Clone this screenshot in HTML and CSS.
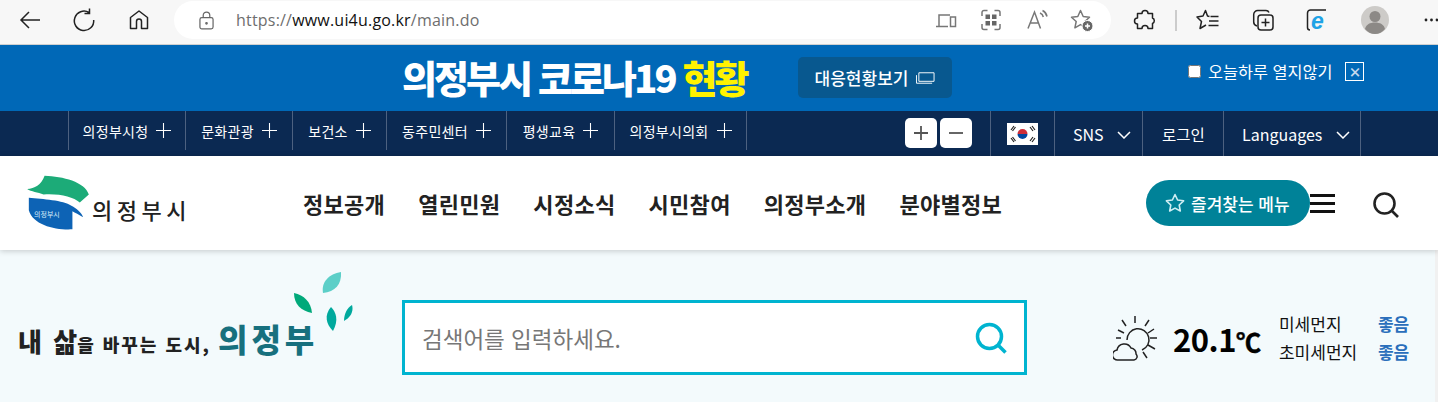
FILE: index.html
```html
<!DOCTYPE html>
<html lang="ko">

<head>
    <meta charset="UTF-8">
    <title>의정부시</title>
    <link rel="stylesheet" href="styles.css">
</head>

<body>
    <!-- browser toolbar -->
    <div class="toolbar">
        <svg class="tool" viewBox="0 0 24 24"><path d="M23 12H4M12 4l-8 8 8 8"/></svg>
        <svg class="tool" viewBox="0 0 24 24"><path d="M17 4.500A9.700 9.700 0 1 0 21.700 12M17.500 0.500V5.500H12.500"/></svg>
        <svg class="tool" viewBox="0 0 24 24"><path d="M3.500 20.500V9.500L12 3l8.500 6.500v11h-6v-7a2.500 2.500 0 0 0-5 0v7z" stroke-linejoin="round"/></svg>
        <div class="omnibox">
            <svg class="lock" viewBox="0 0 16 20"><rect x="1" y="7" width="14" height="12" rx="2"/><path d="M4.500 7V4.500a3.500 3.500 0 0 1 7 0V7"/><circle cx="8" cy="13" r="0.800"/></svg>
            <span class="url">https://<b>www.ui4u.go.kr</b>/main.do</span>
            <svg class="omni-icon" viewBox="0 0 24 24"><path d="M5 18V7h11M2 18.500h12M16.500 9h5v9.500h-5z"/><path d="M19 15.500h.1"/></svg>
            <svg class="omni-icon" viewBox="0 0 24 24"><path d="M3 8V4.500A2 2 0 0 1 5 2.500h3.500M15.500 2.500H19a2 2 0 0 1 2 2V8M21 16v3.500a2 2 0 0 1-2 2h-3.500M8.500 21.500H5a2 2 0 0 1-2-2V16"/><path class="fill" d="M6.500 6.500h4.500v4.500H6.500zM13 6.500h4.500v4.500H13zM6.500 13h4.500v4.500H6.500zM13 13h4.500v4.500H13z"/></svg>
            <svg class="omni-icon" viewBox="0 0 24 24"><path d="M3 20.500 9.500 4l6 16.500M5.500 15h8M15 5c2 .8 3 2.300 3.300 4M17.500 2.500c2.800 1.300 4 3.500 4.500 6"/></svg>
            <svg class="omni-icon" viewBox="0 0 24 24"><path d="M10.500 2.500l2.700 6 6.300.7-4.700 4.300 1.300 6.300-5.600-3.200-5.600 3.200 1.300-6.300-4.700-4.300 6.300-.7z" stroke-linejoin="round"/><circle class="fill ring" cx="17.500" cy="18" r="5.500"/><path class="white" d="M17.500 15.500v5M15 18h5"/></svg>
        </div>
        <svg class="tool puzzle" viewBox="0 0 24 24"><path d="M9 5.500a3 3 0 0 1 6 0h4.500V10a3 3 0 0 1 0 5.500v5H15a3 3 0 0 0-6 0H4.500V16a3 3 0 0 1 0-6V5.500z" stroke-linejoin="round"/></svg>
        <span class="tool-sep"></span>
        <svg class="tool fav" viewBox="0 0 24 24"><path d="M13.500 8.500 11.500 8l-2-5.500L7 8 1 9l4.500 4.500L4 20.500l6-3.500" stroke-linejoin="round"/><path d="M14.500 8.500h8M13 13h9.500M12.500 17.500h10"/></svg>
        <svg class="tool coll" viewBox="0 0 24 24"><path d="M6 18c-2-.5-3.300-2-3.300-4V6.500a4 4 0 0 1 4-4H15c1.500 0 2.500.8 3 2"/><rect x="7" y="7" width="15" height="15" rx="3"/><path d="M14.500 10.500v8M10.500 14.500h8"/></svg>
        <svg class="tool ie" viewBox="0 0 24 24"><path d="M4 22c-1.500 0-2.500-1-2.500-2.500V5a3 3 0 0 1 3-3H20"/><text class="ie-e" x="5" y="20.500">e</text></svg>
        <svg class="avatar" viewBox="0 0 28 28"><circle class="avatar-bg" cx="14" cy="14" r="14"/><circle class="avatar-fg" cx="14" cy="10.500" r="5.500"/><path class="avatar-fg" d="M4 23c1-4.500 5-6.500 10-6.500s9 2 10 6.500c-2.500 3-6 5-10 5s-7.500-2-10-5z"/></svg>
        <svg class="dots" viewBox="0 0 15 4"><circle cx="2" cy="2" r="1.400"/><circle cx="7.500" cy="2" r="1.400"/><circle cx="13" cy="2" r="1.400"/></svg>
    </div>

    <!-- corona banner -->
    <div class="banner">
        <div class="banner-title">의정부시 코로나19 <em>현황</em></div>
        <a class="banner-btn">대응현황보기
            <svg class="window-icon" viewBox="0 0 20 12"><path d="M3 .5h16v9H3zM.5 3v8.500H17"/></svg>
        </a>
        <label class="banner-check"><input type="checkbox">오늘하루 열지않기</label>
        <span class="banner-close">×</span>
    </div>

    <!-- top utility bar -->
    <div class="topbar">
        <ul class="site-links">
            <li class="w1">의정부시청 <svg class="plus" viewBox="0 0 14 14"><path d="M7 0v14M0 7h14"/></svg></li>
            <li class="w2">문화관광 <svg class="plus" viewBox="0 0 14 14"><path d="M7 0v14M0 7h14"/></svg></li>
            <li class="w3">보건소 <svg class="plus" viewBox="0 0 14 14"><path d="M7 0v14M0 7h14"/></svg></li>
            <li class="w4">동주민센터 <svg class="plus" viewBox="0 0 14 14"><path d="M7 0v14M0 7h14"/></svg></li>
            <li class="w5">평생교육 <svg class="plus" viewBox="0 0 14 14"><path d="M7 0v14M0 7h14"/></svg></li>
            <li class="w6">의정부시의회 <svg class="plus" viewBox="0 0 14 14"><path d="M7 0v14M0 7h14"/></svg></li>
        </ul>
        <div class="zoom-btns">
            <span class="zoom-btn"><svg viewBox="0 0 14 14"><path d="M7 0v14M0 7h14"/></svg></span>
            <span class="zoom-btn"><svg viewBox="0 0 14 14"><path d="M0 7h14"/></svg></span>
        </div>
        <ul class="util-links">
            <li class="u-flag">
                <svg class="flag" viewBox="0 0 31 22">
                    <rect width="31" height="22" fill="#fff"/>
                    <path d="M10.500 11a5 5 0 0 1 10 0z" fill="#cd2e3a"/>
                    <path d="M10.500 11a5 5 0 0 0 10 0z" fill="#0047a0"/>
                    <path d="M4 7l3-4M5.500 8l3-4M23 4l3 4M25 3l3 4M4 15l3 4M5.500 14l3 4M23 18l3-4M25 19l3-4" stroke="#222" stroke-width="1.200"/>
                </svg>
            </li>
            <li class="u-sns">SNS <svg class="chev" viewBox="0 0 14 8"><path d="M1 1l6 6 6-6"/></svg></li>
            <li class="u-login">로그인</li>
            <li class="u-lang">Languages <svg class="chev" viewBox="0 0 14 8"><path d="M1 1l6 6 6-6"/></svg></li>
        </ul>
    </div>

    <!-- main header -->
    <header class="header">
        <div class="logo">
            <span class="logo-mark">
                <svg viewBox="0 0 190 170">
                    <path d="M3 42C25 40 45 30 55 2c55 2 120 18 132 56l-27 24C140 65 100 55 52 58 35 52 15 50 3 42z" fill="#1cab78"/>
                    <path d="M8 68c42 4 102 7 127 24 15 8 30 20 35 34-12-8-25-14-32-18v54C90 165 20 150 8 105z" fill="#0d63b5"/>
                </svg>
                <span class="logo-small">의정부시</span>
            </span>
            <span class="logo-text">의정부시</span>
        </div>
        <nav class="gnb">
            <a>정보공개</a>
            <a>열린민원</a>
            <a>시정소식</a>
            <a>시민참여</a>
            <a>의정부소개</a>
            <a>분야별정보</a>
        </nav>
        <a class="fav-pill">
            <svg class="pill-star" viewBox="0 0 20 20"><path d="M10 1.500l2.600 5.500 6 .8-4.400 4.200 1.100 6L10 15.100 4.700 18l1.100-6L1.400 7.800l6-.8z" stroke-linejoin="round"/></svg>
            즐겨찾는 메뉴
        </a>
        <span class="burger"><i></i><i></i><i></i></span>
        <svg class="head-search" viewBox="0 0 26 26"><circle cx="11.500" cy="11.500" r="10"/><path d="M19 19l6 6"/></svg>
    </header>

    <!-- search area -->
    <section class="search-area">
        <div class="slogan">
            <svg class="leaves" viewBox="0 0 60 60">
                <path d="M30 21C28 10 36 2 48 0c1 12-6 20-18 21z" fill="#5ccfc8"/>
                <path d="M1 21c10 2 17 9 18 20C8 39 1 32 1 21z" fill="#00a97a"/>
                <path d="M38 35c5 5 8 13 2 24-7-7-9-16-2-24z" fill="#00a99d"/>
                <path d="M59 33c2 7-2 13-8 16 0-7 3-13 8-16z" fill="#00a99d"/>
            </svg>
            <div class="slogan-text"><span class="big">내 삶</span>을 바꾸는 도시, <em>의정부</em></div>
        </div>
        <div class="search-box">
            <span class="placeholder">검색어를 입력하세요.</span>
            <svg class="box-search" viewBox="0 0 32 32"><circle cx="14.500" cy="14.500" r="12"/><path d="M23.500 23.500l7 7"/></svg>
        </div>
        <div class="weather">
            <svg class="weather-icon" viewBox="0 0 46 46">
                <path d="M14 25a11 11 0 1 1 15 10M22 1v7M9 5l4 6M36 5l-4 6M5 15l6 3M41 14l-6 4M3 23h5M37 23h7M35 30l7 4M30 37l4 6"/>
                <path d="M5 45a5 5 0 0 1-1-10 7.500 7.500 0 0 1 14-2 5.500 5.500 0 0 1 5 6 3.500 3.500 0 0 1-2 6z"/>
            </svg>
            <div class="temp">20.1<small>℃</small></div>
            <dl class="dust">
                <dt>미세먼지</dt><dd>좋음</dd>
                <dt>초미세먼지</dt><dd>좋음</dd>
            </dl>
        </div>
    </section>
</body>

</html>
```

FILE: styles.css
```css
* {
    box-sizing: border-box;
}

body {
    margin: 0;
    height: 402px;
    overflow: hidden;
    font-family: "Noto Sans CJK KR", "Noto Sans", sans-serif;
    color: #111;
}

ul,
dl,
dd {
    margin: 0;
    padding: 0;
    list-style: none;
}

svg {
    display: block;
    flex: none;
    fill: none;
}

em {
    font-style: normal;
}

/* browser toolbar */
.toolbar {
    display: flex;
    align-items: center;
    height: 45px;
    padding: 0 0 4px 17px;
    background: #f7f7f7;
    border-bottom: 1px solid #d0d0d0;
}

.tool {
    width: 24px;
    height: 24px;
    margin-right: 31px;
    stroke: #222;
    stroke-width: 1.500;
}

.omnibox {
    display: flex;
    align-items: center;
    flex: none;
    width: 937px;
    height: 38px;
    margin-left: -8px;
    padding-left: 25px;
    background: #fff;
    border-radius: 19px;
}

.lock {
    width: 15px;
    height: 19px;
    stroke: #666;
    stroke-width: 1.300;
}

.url {
    flex: 1;
    margin-left: 22px;
    font-family: "Open Sans", sans-serif;
    font-size: 16px;
    letter-spacing: 0.200px;
    color: #6e6e6e;
}

.url b {
    font-weight: 400;
    color: #111;
}

.omni-icon {
    width: 24px;
    height: 24px;
    margin-right: 21.500px;
    stroke: #777;
    stroke-width: 1.500;
}

.omni-icon:last-child {
    margin-right: 17px;
}

.omni-icon .fill {
    fill: #666;
    stroke: none;
}

.omni-icon .ring {
    stroke: #fff;
    stroke-width: 1;
}

.omni-icon .white {
    stroke: #fff;
}

.puzzle {
    margin-left: 22px;
    margin-right: 0;
}

.tool-sep {
    flex: none;
    width: 2px;
    height: 21px;
    margin-left: 18px;
    background: #ccc;
}

.fav {
    margin-left: 19px;
}

.coll,
.fav {
    margin-right: 31px;
}

.ie {
    margin-right: 31px;
}

.ie-e {
    font-family: "Liberation Sans", sans-serif;
    font-size: 23px;
    font-weight: 700;
    font-style: italic;
    fill: #1fa3e6;
    stroke: none;
}

.avatar {
    width: 28px;
    height: 28px;
}

.avatar-bg {
    fill: #cdcbc8;
}

.avatar-fg {
    fill: #8c8986;
}

.dots {
    width: 15px;
    height: 4px;
    margin-left: 35px;
    fill: #222;
}

/* banner */
.banner {
    display: flex;
    align-items: center;
    height: 66px;
    padding-left: 402px;
    background: #0068b7;
    color: #fff;
}

.banner-title {
    width: 396px;
    margin-top: -3px;
    font-size: 38px;
    font-weight: 900;
    letter-spacing: -2.900px;
    white-space: nowrap;
}

.banner-title em {
    color: #fff200;
}

.banner-btn {
    display: flex;
    align-items: center;
    justify-content: center;
    gap: 8px;
    width: 154px;
    height: 41px;
    margin-top: -1px;
    background: #08588f;
    border-radius: 5px;
    font-size: 17px;
    font-weight: 500;
}

.window-icon {
    width: 19px;
    height: 12px;
    stroke: #fff;
    stroke-width: 1;
}

.banner-check {
    display: flex;
    align-items: center;
    margin-left: 236px;
    margin-top: -14px;
    font-size: 16.300px;
    white-space: nowrap;
}

.banner-check input {
    width: 13px;
    height: 13px;
    margin: 0 7px 0 0;
}

.banner-close {
    display: flex;
    align-items: center;
    justify-content: center;
    width: 19px;
    height: 19px;
    margin-left: 13px;
    margin-top: -14px;
    border: 1px solid #fff;
    font-size: 13px;
    font-weight: 900;
    color: #c5d8ec;
}

/* top bar */
.topbar {
    display: flex;
    height: 45px;
    padding-left: 68px;
    background: #0b2952;
    color: #fff;
}

.site-links,
.util-links {
    display: flex;
}

.site-links {
    border-right: 1px solid #4d6180;
    height: 39px;
}

.site-links li {
    display: flex;
    align-items: center;
    justify-content: center;
    gap: 8px;
    border-left: 1px solid #4d6180;
    font-size: 14px;
    letter-spacing: 0.300px;
    white-space: nowrap;
}

.w1 {
    width: 117px;
}

.w2 {
    width: 107px;
}

.w3 {
    width: 94px;
}

.w4 {
    width: 120px;
}

.w5 {
    width: 108px;
}

.w6 {
    width: 132px;
}

.plus {
    width: 15px;
    height: 15px;
    stroke: #fff;
    stroke-width: 1;
}

.zoom-btns {
    display: flex;
    gap: 3px;
    margin: 7px 0 0 158px;
}

.zoom-btn {
    display: flex;
    align-items: center;
    justify-content: center;
    width: 32px;
    height: 30px;
    background: #fff;
    border-radius: 5px;
}

.zoom-btn svg {
    width: 14px;
    height: 14px;
    stroke: #555;
    stroke-width: 1.800;
}

.util-links {
    height: 45px;
    margin-left: 18px;
    border-right: 1px solid #4d6180;
}

.util-links li {
    display: flex;
    align-items: center;
    border-left: 1px solid #4d6180;
    font-size: 16px;
    white-space: nowrap;
}

.u-flag {
    width: 64px;
    padding-left: 16px;
}

.flag {
    width: 31px;
    height: 22px;
}

.u-sns {
    width: 88px;
    padding-left: 18px;
    gap: 13px;
}

.util-links .u-login {
    width: 81px;
    padding-left: 19px;
    font-size: 15.500px;
}

.u-lang {
    width: 137px;
    padding-left: 18px;
    gap: 14px;
}

.chev {
    width: 14px;
    height: 8px;
    margin-top: 2px;
    stroke: #fff;
    stroke-width: 1.500;
}

/* header */
.header {
    position: relative;
    display: flex;
    align-items: center;
    height: 94px;
    padding-left: 26px;
    background: #fff;
    box-shadow: 0 1px 6px rgba(0, 0, 0, 0.200);
}

.logo {
    display: flex;
    align-items: flex-end;
    width: 277px;
}

.logo-mark {
    position: relative;
    width: 64px;
    height: 57px;
}

.logo-mark svg {
    width: 64px;
    height: 57px;
}

.logo-small {
    position: absolute;
    left: 8px;
    top: 34px;
    font-size: 7px;
    color: #d8ecf8;
    white-space: nowrap;
}

.logo-text {
    margin: 0 0 11px 2px;
    font-size: 22px;
    font-weight: 500;
    letter-spacing: 4.500px;
    line-height: 24px;
    color: #222;
    white-space: nowrap;
}

.gnb {
    display: flex;
    gap: 33px;
    width: 843px;
    margin-top: -1px;
    font-size: 22px;
    font-weight: 700;
    letter-spacing: 0.300px;
    color: #222;
    white-space: nowrap;
}

.fav-pill {
    display: flex;
    align-items: center;
    flex: none;
    gap: 6px;
    width: 164px;
    height: 46px;
    padding-left: 19px;
    background: #008298;
    border-radius: 23px;
    font-size: 17px;
    font-weight: 500;
    color: #fff;
    white-space: nowrap;
}

.pill-star {
    width: 20px;
    height: 20px;
    stroke: #cfeef3;
    stroke-width: 1.600;
}

.burger {
    display: flex;
    flex-direction: column;
    gap: 5px;
    width: 25px;
}

.burger i {
    height: 3px;
    background: #111;
}

.head-search {
    width: 26px;
    height: 26px;
    margin: 3px 0 0 38px;
    stroke: #222;
    stroke-width: 2.600;
}

/* search area */
.search-area {
    display: flex;
    align-items: flex-start;
    height: 152px;
    padding-left: 18px;
    background: #f3fafc;
    border-right: 3px solid #f1f1f1;
}

.slogan {
    display: flex;
    flex-direction: column;
    align-items: flex-end;
    width: 336px;
    padding-top: 22px;
}

.leaves {
    width: 60px;
    height: 60px;
    margin-right: 1px;
}

.slogan-text {
    align-self: flex-start;
    margin-top: -12px;
    font-size: 18px;
    font-weight: 900;
    letter-spacing: 2px;
    line-height: 36px;
    color: #222;
    white-space: nowrap;
}

.slogan-text .big {
    font-size: 26px;
    letter-spacing: 0;
    word-spacing: 4px;
}

.slogan-text em {
    font-size: 32px;
    letter-spacing: 4px;
    color: #17707e;
}

.search-box {
    display: flex;
    align-items: center;
    justify-content: space-between;
    flex: none;
    width: 625px;
    height: 75px;
    margin: 50px 0 0 48px;
    padding: 0 17px;
    background: #fff;
    border: 3px solid #00b4d0;
}

.placeholder {
    font-size: 22.500px;
    color: #777;
}

.box-search {
    width: 32px;
    height: 32px;
    stroke: #00b4d0;
    stroke-width: 3.500;
}

.weather {
    display: flex;
    align-items: center;
    margin: 60px 0 0 86px;
}

.weather-icon {
    width: 46px;
    height: 46px;
    stroke: #222;
    stroke-width: 1.500;
}

.temp {
    margin-left: 14px;
    font-size: 31px;
    font-weight: 700;
    color: #000;
    letter-spacing: -0.500px;
    white-space: nowrap;
}

.temp small {
    font-size: 25px;
    letter-spacing: -3px;
    -webkit-text-stroke: 0.500px #000;
}

.dust {
    display: grid;
    grid-template-columns: 99px auto;
    margin-left: 21px;
    font-size: 17px;
    line-height: 28px;
}

.dust dd {
    font-weight: 700;
    color: #2a6ebb;
}
```
